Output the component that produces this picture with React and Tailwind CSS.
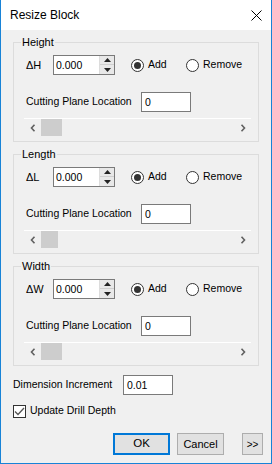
import React from 'react'

const FONT = { fontFamily: '"Liberation Sans", Arial, sans-serif' }

function SpinBox({ value }) {
  return (
    <div className="flex h-[20px] w-[62px] border border-[#7a7a7a] bg-white">
      <div className="flex-1 pl-[2px] leading-[18px]">{value}</div>
      <div className="flex w-[15px] flex-col border-l border-[#dcdcdc] bg-[#f0f0f0]">
        <div className="flex h-[9px] items-center justify-center border-b border-[#cfcfcf] bg-[#e8e8e8]">
          <svg width="7" height="4" viewBox="0 0 7 4"><path d="M0 4 L3.5 0 L7 4 Z" fill="#222" /></svg>
        </div>
        <div className="flex flex-1 items-center justify-center bg-[#e8e8e8]">
          <svg width="7" height="4" viewBox="0 0 7 4"><path d="M0 0 L3.5 4 L7 0 Z" fill="#222" /></svg>
        </div>
      </div>
    </div>
  )
}

function Radio({ checked, label, className }) {
  return (
    <label className={'flex items-center ' + (className || '')}>
      <span className="flex h-[13px] w-[13px] items-center justify-center rounded-full border border-[#333] bg-white">
        {checked && <span className="h-[7px] w-[7px] rounded-full bg-[#333]" />}
      </span>
      <span className="ml-[4px]">{label}</span>
    </label>
  )
}

function TextBox({ value, className }) {
  return (
    <div className={'h-[20px] border border-[#7a7a7a] bg-white pl-[3px] leading-[18px] ' + (className || '')}>{value}</div>
  )
}

function HScroll({ thumb }) {
  return (
    <div className="-ml-[1px] mt-[6px] flex h-[18px] items-center border-t border-white bg-[#f0f0f0]">
      <div className="flex h-full w-[17px] items-center justify-center">
        <svg width="6" height="8" viewBox="0 0 6 8"><path d="M4.5 0.8 L1.5 4 L4.5 7.2" fill="none" stroke="#606060" strokeWidth="1.6" /></svg>
      </div>
      <div className="h-full bg-[#cdcdcd]" style={{ width: thumb }} />
      <div className="flex-1" />
      <div className="flex h-full w-[17px] items-center justify-center">
        <svg width="6" height="8" viewBox="0 0 6 8"><path d="M1.5 0.8 L4.5 4 L1.5 7.2" fill="none" stroke="#606060" strokeWidth="1.6" /></svg>
      </div>
    </div>
  )
}

function Group({ title, delta, thumb, className }) {
  return (
    <fieldset className={'mx-[12px] border border-[#dcdcdc] pb-[5px] pl-[11px] pr-[7px] ' + (className || '')}>
      <legend className="-ml-[4px] px-[1px] text-[11px] leading-[13px]">{title}</legend>
      <div className="mt-[6px] flex h-[20px] items-center">
        <span className="ml-[1px] w-[27px] text-[11px]">{delta}</span>
        <SpinBox value="0.000" />
        <Radio checked label="Add" className="ml-[16px] w-[55px]" />
        <Radio label="Remove" />
      </div>
      <div className="mt-[17px] flex h-[20px] items-center">
        <span className="ml-[1px] w-[115px]">Cutting Plane Location</span>
        <TextBox value="0" className="w-[50px]" />
      </div>
      <HScroll thumb={thumb} />
    </fieldset>
  )
}

function Button({ children, primary, className }) {
  return (
    <button
      className={
        'flex h-[22px] items-center justify-center bg-[#e1e1e1] ' +
        (primary ? 'border-2 border-[#0078d7] ' : 'border border-[#adadad] ') +
        (className || '')
      }
    >
      {children}
    </button>
  )
}

export default function App() {
  return (
    <div className="flex h-[464px] w-[272px] flex-col border-x border-b border-[#1883d7] bg-[#f0f0f0] text-[10.5px] text-black" style={FONT}>
      <div className="flex h-[30px] shrink-0 items-center justify-between bg-white pl-[9px] pr-[9px]">
        <span className="text-[12px]">Resize Block</span>
        <svg width="11" height="11" viewBox="0 0 11 11"><path d="M0.5 0.5 L10.5 10.5 M10.5 0.5 L0.5 10.5" stroke="#000" strokeWidth="1" /></svg>
      </div>

      <Group title="Height" delta="ΔH" thumb={21} className="mt-[6px]" />
      <Group title="Length" delta="ΔL" thumb={17} className="mt-[6px]" />
      <Group title="Width" delta="ΔW" thumb={21} className="mt-[6px]" />

      <div className="mt-[9px] flex h-[20px] items-center pl-[12px]">
        <span className="w-[110px]">Dimension Increment</span>
        <TextBox value="0.01" className="w-[50px]" />
      </div>

      <label className="mt-[8px] flex h-[16px] items-center pl-[12px]">
        <span className="flex h-[13px] w-[13px] items-center justify-center border border-[#333] bg-white">
          <svg width="11" height="9" viewBox="0 0 11 9"><path d="M1 4.5 L4 7.5 L10 1" fill="none" stroke="#555" strokeWidth="1.3" /></svg>
        </span>
        <span className="ml-[4px]">Update Drill Depth</span>
      </label>

      <div className="mt-[14px] flex justify-end pr-[8px]">
        <Button primary className="w-[57px] text-[11.5px]">OK</Button>
        <Button className="ml-[7px] w-[47px] text-[11px]">Cancel</Button>
        <Button className="ml-[18px] w-[21px] text-[10px]">&gt;&gt;</Button>
      </div>
    </div>
  )
}
